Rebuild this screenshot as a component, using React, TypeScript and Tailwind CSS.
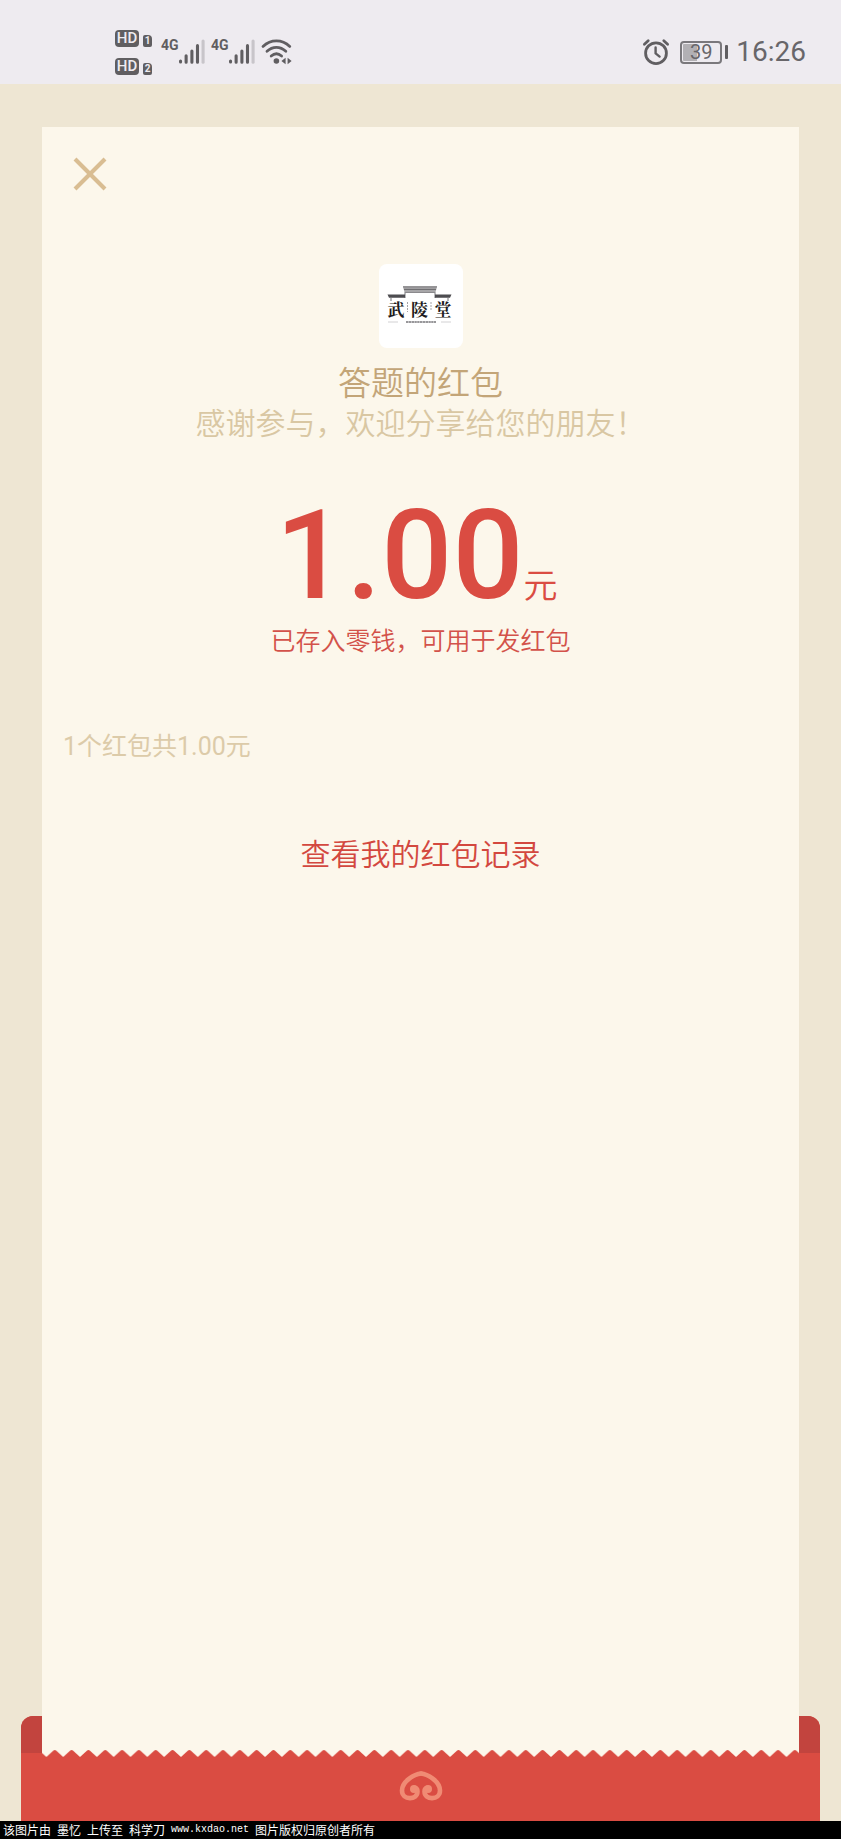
import { X } from "lucide-react";

const cjk = "font-['Roboto','Noto_Sans_CJK_SC',sans-serif]";

function HdBadge({ sim }: { sim: string }) {
  return (
    <div className="flex items-end gap-1">
      <span className="flex h-[17px] w-6 items-center justify-center rounded-[4px] bg-[#605e61] font-['Roboto',sans-serif] text-[15px] leading-none font-medium text-[#eeebf0]">
        HD
      </span>
      <span className="flex h-3 w-[9px] items-center justify-center rounded-[2px] rounded-tr-[4px] bg-[#605e61] font-['Roboto',sans-serif] text-[10px] leading-none font-bold text-[#eeebf0]">
        {sim}
      </span>
    </div>
  );
}

function Signal() {
  return (
    <div className="flex w-[43px] items-start justify-between">
      <span className="font-['Roboto',sans-serif] text-[14px] leading-[14px] font-bold text-[#605e61]">
        4G
      </span>
      <svg className="h-[27px] w-[26px] shrink-0" viewBox="1 0 27 27" aria-hidden="true">
        <g strokeLinecap="round" strokeWidth="3.2" stroke="#605e61">
          <path d="M2.6 24.4v-1M8.4 24.6v-6.6M14.4 24.6V13M20.2 24.6V7.4" />
          <path d="M26 24.6V2.6" stroke="#c8c5ca" />
        </g>
      </svg>
    </div>
  );
}

function WifiIcon() {
  return (
    <svg className="h-7 w-8" viewBox="0 0 32 28" aria-hidden="true">
      <g fill="none" stroke="#605e61" strokeWidth="2.8" strokeLinecap="round">
        <path d="M2 8.4C9.800 1 21 1 28.800 8.4" />
        <path d="M6 13.2c5.6-5.2 13.2-5.2 18.8 0" />
        <path d="M10.2 18c3.2-2.8 7.2-2.8 10.4 0" />
      </g>
      <circle cx="15.400" cy="23" r="2.8" fill="#605e61" />
      <path d="M24.600 19.8v6.4L20.400 23zM26.600 19.8v6.4l4-3.2z" fill="#605e61" />
    </svg>
  );
}

function AlarmIcon() {
  return (
    <svg className="h-7 w-7" viewBox="0 0 28 28" aria-hidden="true">
      <g fill="none" stroke="#605e61" strokeLinecap="round" strokeLinejoin="round">
        <circle cx="14" cy="15.2" r="10.4" strokeWidth="2.8" />
        <path d="M13.6 9.4v6l4 3.2" strokeWidth="2.4" />
        <path d="M2.4 6.2l3.8-3.4M25.6 6.2l-3.8-3.4" strokeWidth="2.8" />
      </g>
    </svg>
  );
}

function StatusBar() {
  return (
    <header className="flex h-[84px] items-start justify-between bg-[#eeebf0] pt-[30px] pr-[35px] pl-[115px]">
      <div className="flex items-start">
        <div className="flex flex-col gap-[11px]">
          <HdBadge sim="1" />
          <HdBadge sim="2" />
        </div>
        <div className="flex gap-[7px] pt-2 pl-[9px]">
          <Signal />
          <Signal />
          <WifiIcon />
        </div>
      </div>
      <div className="flex h-[44px] items-center text-[#68666a]">
        <AlarmIcon />
        <div className="ml-[10px] flex items-center gap-[3px]">
          <div className="flex h-[23px] w-[42px] items-center justify-center rounded-[4px] border-2 border-[#7a787c] bg-linear-to-r from-[#b2b0b4] from-40% to-transparent to-40% bg-clip-content p-px font-['Roboto',sans-serif] text-[20px] leading-none">
            39
          </div>
          <div className="h-[14px] w-[3px] rounded-[1px] bg-[#605e61]" />
        </div>
        <time className="ml-2 font-['Roboto',sans-serif] text-[28px] leading-8">16:26</time>
      </div>
    </header>
  );
}

function MerchantLogo() {
  return (
    <svg
      className="h-[84px] w-[84px] rounded-lg bg-white"
      viewBox="0 0 84 84"
      role="img"
      aria-label="武陵堂"
    >
      <path d="M24 23h34l-1.5 5h-31z" fill="#a7a6a8" />
      <path d="M24 22.8h34M25 25.4h32" stroke="#6a696c" strokeWidth="1" />
      <path d="M26 28v6M56 28v6" stroke="#77767a" strokeWidth="1" />
      <path d="M8.5 30.5H26v3.2H10zM56 30.5h16.500l-1.500 3.200H56z" fill="#4d4c50" />
      <path d="M26 28.500h30" stroke="#8b8a8d" strokeWidth="1" />
      <path d="M12 34v3M69 34v3" stroke="#77767a" strokeWidth="1" />
      <g
        className="font-['Noto_Serif_CJK_SC','Noto_Sans_CJK_SC',serif] font-bold"
        fontSize="17"
        fill="#1d1b20"
        textAnchor="middle"
      >
        <text x="17" y="52">武</text>
        <text x="40.500" y="52">陵</text>
        <text x="64" y="52">堂</text>
      </g>
      <path d="M28.500 38v10M52 38v8" stroke="#a5a4a7" strokeWidth="1" strokeDasharray="2 1" />
      <path d="M27 58h30" stroke="#77767a" strokeWidth="1.600" strokeDasharray="2.400 .4" />
      <path d="M9 58h10M62 58h10" stroke="#d2d1d3" strokeWidth="1" />
    </svg>
  );
}

function TornEdge() {
  return (
    <svg className="h-[7px] w-full" aria-hidden="true">
      <defs>
        <pattern id="teeth" x="4.4" width="16.82" height="7" patternUnits="userSpaceOnUse">
          <path d="M0 7 6.800.8Q8.410-.6 10 .8L16.820 7z" fill="#da4c42" />
        </pattern>
      </defs>
      <rect width="100%" height="7" fill="#fcf7eb" />
      <rect width="100%" height="7" fill="url(#teeth)" />
    </svg>
  );
}

function Envelope() {
  return (
    <footer className="px-[21px]">
      <div className="flex h-[41px] rounded-t-[12px] bg-[#da4c42]">
        <div className="h-[37px] w-[21px] rounded-tl-[12px] bg-[#c2443e]" />
        <div className="flex flex-1 flex-col">
          <div className="flex-1 bg-[#fcf7eb]" />
          <TornEdge />
        </div>
        <div className="h-[37px] w-[21px] rounded-tr-[12px] bg-[#c2443e]" />
      </div>
      <div className="flex h-16 justify-center bg-[#da4c42] pt-[13px]">
        <svg className="h-[31px] w-11" viewBox="0 0 44 31" aria-hidden="true">
          <g fill="none" stroke="#f08b74" strokeWidth="4.600" strokeLinecap="round" strokeLinejoin="round">
            <path d="M22 3.500C16 4 3 11 3 20.500C3 30.500 18.500 30.500 18.500 21.500C18.500 17 13.500 17.500 14 20" />
            <path d="M22 3.500C28 4 41 11 41 20.500C41 30.500 25.500 30.500 25.500 21.500C25.500 17 30.500 17.500 30 20" />
          </g>
          <circle cx="15" cy="19" r="4" fill="#f08b74" />
          <circle cx="29" cy="19" r="4" fill="#f08b74" />
        </svg>
      </div>
    </footer>
  );
}

const credit = ["该图片由", "墨忆", "上传至", "科学刀", "www.kxdao.net", "图片版权归原创者所有"];

export default function App() {
  return (
    <div className={`flex min-h-screen flex-col bg-[#eee6d3] ${cjk}`}>
      <StatusBar />
      <main className="flex flex-1 flex-col px-[42px] pt-[43px]">
        <section className="flex flex-1 flex-col items-center bg-[#fcf7eb]">
          <button
            type="button"
            aria-label="关闭"
            className="mt-[22px] ml-6 flex h-[50px] w-12 items-center justify-center self-start text-[#d9bd92]"
          >
            <X size={60} strokeWidth={1.6} strokeLinecap="butt" className="shrink-0" />
          </button>
          <div className="mt-[65px]">
            <MerchantLogo />
          </div>
          <h1 className="mt-4 text-[33px] leading-10 font-[350] text-[#c3a578]">答题的红包</h1>
          <p className="text-[30px] leading-10 font-[350] text-[#d9c7a3]">
            感谢参与，欢迎分享给您的朋友！
          </p>
          <p className="mt-[42px] flex items-baseline pr-2 text-[#da4c42]">
            <span className="text-[125px] leading-[140px] font-medium">1.00</span>
            <span className="text-[34px] leading-10 font-[350]">元</span>
          </p>
          <p className="text-[25px] leading-8 font-[350] text-[#d3524a]">已存入零钱，可用于发红包</p>
          <p className="mt-[73px] self-start pl-[21px] text-[25px] leading-8 font-normal text-[#dccba9]">
            1个红包共1.00元
          </p>
          <a href="#records" className="mt-[72px] text-[30px] leading-10 font-[350] text-[#d3483f]">
            查看我的红包记录
          </a>
        </section>
      </main>
      <Envelope />
      <div className="flex h-[18px] items-center gap-[6px] bg-black pl-[3px] font-['Noto_Sans_CJK_SC',sans-serif] text-[12px] leading-[18px] text-white">
        {credit.map((part) =>
          part.startsWith("www") ? (
            <span key={part} className="font-['Liberation_Mono',monospace] text-[10px]">
              {part}
            </span>
          ) : (
            <span key={part}>{part}</span>
          ),
        )}
      </div>
    </div>
  );
}
